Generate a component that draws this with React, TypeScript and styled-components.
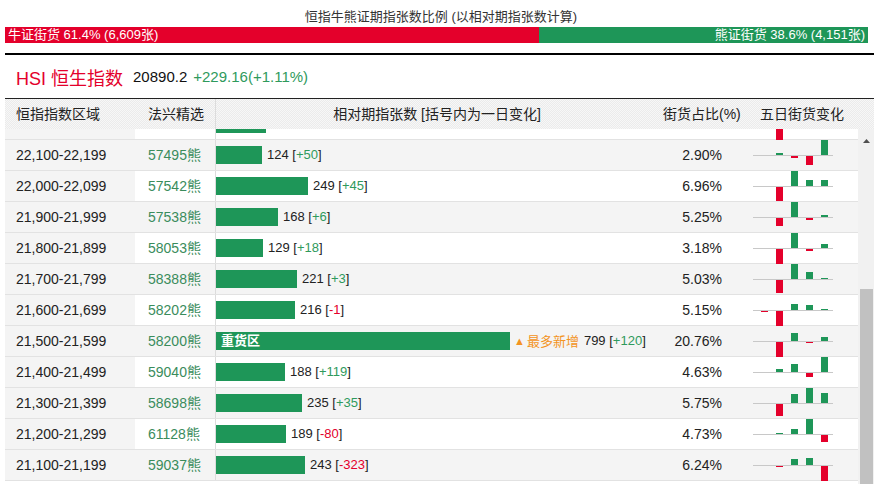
import React from 'react'
import styled, { createGlobalStyle } from 'styled-components'

const RED = '#e4002b'
const GREEN = '#1e9658'
const TEXT_GREEN = '#3a8c5c'
const PX_PER_UNIT = 0.368

type Row = {
  range: string
  code: string
  count: number
  change: number
  pct: string
  spark: number[]
  heavy?: boolean
  // row scrolled mostly under the header: only the bar and chart peek out
  hidden?: boolean
}

const rows: Row[] = [
  { range: '22,200-22,299', code: '57481熊', count: 136, change: 12, pct: '3.18%', spark: [0, -15, 0, 0, 0], hidden: true },
  { range: '22,100-22,199', code: '57495熊', count: 124, change: 50, pct: '2.90%', spark: [0, 2, -2, -9, 15] },
  { range: '22,000-22,099', code: '57542熊', count: 249, change: 45, pct: '6.96%', spark: [0, -14, 15, 6, 6] },
  { range: '21,900-21,999', code: '57538熊', count: 168, change: 6, pct: '5.25%', spark: [0, -8, 15, -2, 2] },
  { range: '21,800-21,899', code: '58053熊', count: 129, change: 18, pct: '3.18%', spark: [0, -15, 15, -2, 4] },
  { range: '21,700-21,799', code: '58388熊', count: 221, change: 3, pct: '5.03%', spark: [0, -13, 15, 7, 1] },
  { range: '21,600-21,699', code: '58202熊', count: 216, change: -1, pct: '5.15%', spark: [-1, -15, 6, 5, 1] },
  { range: '21,500-21,599', code: '58200熊', count: 799, change: 120, pct: '20.76%', spark: [0, -15, 8, -1, 4], heavy: true },
  { range: '21,400-21,499', code: '59040熊', count: 188, change: 119, pct: '4.63%', spark: [0, 3, 8, -4, 15] },
  { range: '21,300-21,399', code: '58698熊', count: 235, change: 35, pct: '5.75%', spark: [0, -12, 9, 15, 10] },
  { range: '21,200-21,299', code: '61128熊', count: 189, change: -80, pct: '4.73%', spark: [0, 1, 5, 15, -7] },
  { range: '21,100-21,199', code: '59037熊', count: 243, change: -323, pct: '6.24%', spark: [0, -1, 6, 7, -15] },
]

const GlobalStyle = createGlobalStyle`
  html, body {
    margin: 0;
    padding: 0;
    background: #fff;
  }
  body {
    font-family: 'Liberation Sans', 'Noto Sans CJK SC', Arial, sans-serif;
    color: #222;
  }
`

const Page = styled.div`
  width: 874px;
  height: 484px;
  overflow: hidden;
  padding-left: 5px;
  box-sizing: border-box;
`

const Title = styled.div`
  padding: 9px 0 2px 3px;
  font-size: 13px;
  line-height: 16px;
  text-align: center;
  color: #333;
`

const RatioBar = styled.div`
  display: flex;
  height: 16px;
  margin-right: 6px;
  font-size: 13px;
  line-height: 16px;
  color: #fff;
`

const Segment = styled.div<{ $bull?: boolean }>`
  background: ${p => (p.$bull ? RED : GREEN)};
  ${p => (p.$bull ? 'width: 534px; padding-left: 3px;' : 'flex: 1; text-align: right; padding-right: 3px;')}
  white-space: nowrap;
  box-sizing: border-box;
`

const Rule = styled.div`
  height: 2px;
  margin-top: 10px;
  background: #000;
`

const IndexLine = styled.div`
  display: flex;
  align-items: center;
  height: 43px;
  padding-left: 11px;
  white-space: nowrap;
`

const IndexName = styled.span`
  font-size: 18px;
  color: ${RED};
`

const IndexPrice = styled.span`
  margin-left: 10px;
  font-size: 15px;
  color: #111;
`

const IndexChange = styled.span`
  margin-left: 6px;
  font-size: 15px;
  color: #2f9a5c;
`

const Header = styled.div`
  display: flex;
  height: 30px;
  border-top: 1px solid #222;
  background: repeating-conic-gradient(#ebebeb 0 25%, #f7f7f7 0 50%) 0 0 / 2px 2px;
  font-size: 14px;
  line-height: 30px;
  color: #222;
`

const HeadCell = styled.div<{ $w?: number; $pl?: number; $center?: boolean; $divider?: boolean }>`
  ${p => (p.$w ? `width: ${p.$w}px;` : 'flex: 1;')}
  padding-left: ${p => p.$pl ?? 0}px;
  text-align: ${p => (p.$center ? 'center' : 'left')};
  border-left: ${p => (p.$divider ? '1px solid #dcdcdc' : 'none')};
  box-sizing: border-box;
  white-space: nowrap;
`

const Body = styled.div`
  display: flex;
  height: 355px;
`

const Viewport = styled.div`
  width: 853px;
  overflow: hidden;
`

const List = styled.div`
  margin-top: -20px;
`

const TableRow = styled.div<{ $alt: boolean }>`
  display: flex;
  height: 30px;
  border-bottom: 1px solid #e2e2e2;
  background: ${p => (p.$alt ? '#f4f4f4' : '#fff')};
  font-size: 14px;
  line-height: 30px;
`

const RangeCell = styled.div`
  width: 130px;
  padding-left: 11px;
  box-sizing: border-box;
  background: #f4f4f4;
  color: #222;
`

const CodeCell = styled.div`
  width: 80px;
  padding-left: 13px;
  box-sizing: border-box;
  color: ${TEXT_GREEN};
`

const VolCell = styled.div`
  display: flex;
  align-items: center;
  width: 443px;
  border-left: 1px solid #dcdcdc;
  box-sizing: border-box;
  font-size: 13px;
  white-space: nowrap;
`

const VolBar = styled.div`
  height: 18px;
  background: ${GREEN};
  color: #fff;
  font-weight: bold;
  font-size: 13px;
  line-height: 18px;
  padding-left: 5px;
  box-sizing: border-box;
`

const VolLabel = styled.span`
  margin-left: 5px;
  color: #222;
`

const Hot = styled.span`
  margin-left: 4px;
  color: #f39322;
`

const HotArrow = styled.span`
  font-size: 11px;
  margin-right: 2px;
  vertical-align: 1px;
`

const Delta = styled.span<{ $up: boolean }>`
  color: ${p => (p.$up ? '#2f9a5c' : RED)};
`

const PctCell = styled.div`
  width: 87px;
  padding-right: 23px;
  box-sizing: border-box;
  text-align: right;
  color: #222;
`

const SparkCell = styled.div`
  flex: 1;
  padding-left: 8px;
  display: flex;
  align-items: flex-start;
  svg {
    overflow: visible;
    display: block;
  }
`

const Scrollbar = styled.div`
  width: 16px;
  background: #f1f1f1;
`

const ScrollButton = styled.div`
  height: 24px;
  display: flex;
  align-items: center;
  justify-content: center;
`

const Thumb = styled.div`
  margin: 136px 1px 0 2px;
  height: 220px;
  background: #c1c1c1;
`

const Spark = ({ values }: { values: number[] }) => (
  <svg width="80" height="30" viewBox="0 0 80 30">
    <rect x="0" y="15" width="80" height="1" fill="#c8c8c8" />
    {values.map((v, i) =>
      v === 0 ? null : (
        <rect
          key={i}
          x={8 + i * 15}
          y={v > 0 ? 15 - v : 16}
          width="7"
          height={Math.abs(v)}
          fill={v > 0 ? GREEN : RED}
        />
      )
    )}
  </svg>
)

const Change = ({ value }: { value: number }) => (
  <>
    [<Delta $up={value >= 0}>{value >= 0 ? `+${value}` : value}</Delta>]
  </>
)

export default function App() {
  return (
    <Page>
      <GlobalStyle />
      <Title>恒指牛熊证期指张数比例 (以相对期指张数计算)</Title>
      <RatioBar>
        <Segment $bull>牛证街货 61.4% (6,609张)</Segment>
        <Segment>熊证街货 38.6% (4,151张)</Segment>
      </RatioBar>
      <Rule />
      <IndexLine>
        <IndexName>HSI 恒生指数</IndexName>
        <IndexPrice>20890.2</IndexPrice>
        <IndexChange>+229.16(+1.11%)</IndexChange>
      </IndexLine>
      <Header>
        <HeadCell $w={130} $pl={11}>恒指指数区域</HeadCell>
        <HeadCell $w={80} $pl={13}>法兴精选</HeadCell>
        <HeadCell $w={443} $center $divider>相对期指张数 [括号内为一日变化]</HeadCell>
        <HeadCell $w={87} $pl={5}>街货占比(%)</HeadCell>
        <HeadCell $pl={15}>五日街货变化</HeadCell>
      </Header>
      <Body>
        <Viewport>
          <List>
            {rows.map((r, i) => (
              <TableRow key={r.range} $alt={i % 2 === 1}>
                <RangeCell>{r.hidden ? '' : r.range}</RangeCell>
                <CodeCell>{r.hidden ? '' : r.code}</CodeCell>
                <VolCell>
                  <VolBar style={{ width: Math.round(r.count * PX_PER_UNIT) }}>
                    {r.heavy ? '重货区' : ''}
                  </VolBar>
                  {r.heavy && (
                    <Hot>
                      <HotArrow>▲</HotArrow>最多新增
                    </Hot>
                  )}
                  {!r.hidden && (
                    <VolLabel>
                      {r.count} <Change value={r.change} />
                    </VolLabel>
                  )}
                </VolCell>
                <PctCell>{r.hidden ? '' : r.pct}</PctCell>
                <SparkCell>
                  <Spark values={r.spark} />
                </SparkCell>
              </TableRow>
            ))}
          </List>
        </Viewport>
        <Scrollbar>
          <ScrollButton>
            <svg width="7" height="4" viewBox="0 0 7 4">
              <polygon points="3.5,0 7,4 0,4" fill="#505050" />
            </svg>
          </ScrollButton>
          <Thumb />
        </Scrollbar>
      </Body>
    </Page>
  )
}
